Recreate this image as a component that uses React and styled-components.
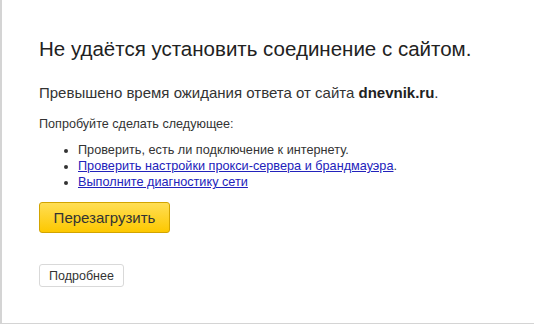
import React from "react";
import styled, { createGlobalStyle } from "styled-components";

const GlobalStyle = createGlobalStyle`
  body {
    margin: 0;
    background: #fff;
    font-family: "Liberation Sans", Arial, sans-serif;
    color: #222;
  }
`;

const Frame = styled.div`
  box-sizing: border-box;
  width: 534px;
  height: 324px;
  border-left: 2px solid #d4d4d4;
  border-bottom: 1px solid #d4d4d4;
  padding: 37px 0 0 37px;
`;

const Title = styled.h1`
  margin: 0;
  font-size: 20.5px;
  font-weight: normal;
  line-height: 24px;
  color: #222;
`;

const Message = styled.p`
  margin: 23px 0 0;
  font-size: 15px;
  line-height: 18px;
  color: #333;

  b {
    color: #222;
  }
`;

const Hint = styled.p`
  margin: 14px 0 0;
  font-size: 12.6px;
  line-height: 16px;
  color: #333;
`;

const Tips = styled.ul`
  margin: 10px 0 0;
  padding-left: 39px;
  font-size: 12.7px;
  line-height: 16px;
  color: #333;

  a {
    color: #2222bb;
    text-decoration: underline;
  }
`;

const Button = styled.button`
  display: block;
  box-sizing: border-box;
  font-family: "Liberation Sans", Arial, sans-serif;
  cursor: pointer;
  margin-top: ${(p) => p.$gap}px;
  width: ${(p) => p.$w}px;
  height: ${(p) => p.$h}px;
  font-size: ${(p) => (p.$primary ? 15 : 12.5)}px;
  color: #333;
  border-radius: 3px;
  border: 1px solid ${(p) => (p.$primary ? "#d2a400" : "#d9d9d9")};
  background: ${(p) =>
    p.$primary ? "linear-gradient(#ffde55, #fdc800)" : "#fff"};
  padding: 0;
`;

export default function App() {
  return (
    <>
      <GlobalStyle />
      <Frame>
        <Title>Не удаётся установить соединение с сайтом.</Title>
        <Message>
          Превышено время ожидания ответа от сайта <b>dnevnik.ru</b>.
        </Message>
        <Hint>Попробуйте сделать следующее:</Hint>
        <Tips>
          <li>Проверить, есть ли подключение к интернету.</li>
          <li>
            <a href="#proxy">Проверить настройки прокси-сервера и брандмауэра</a>.
          </li>
          <li>
            <a href="#diag">Выполните диагностику сети</a>
          </li>
        </Tips>
        <Button $primary $gap={12} $w={131} $h={31}>
          Перезагрузить
        </Button>
        <Button $gap={31} $w={85} $h={23}>
          Подробнее
        </Button>
      </Frame>
    </>
  );
}
